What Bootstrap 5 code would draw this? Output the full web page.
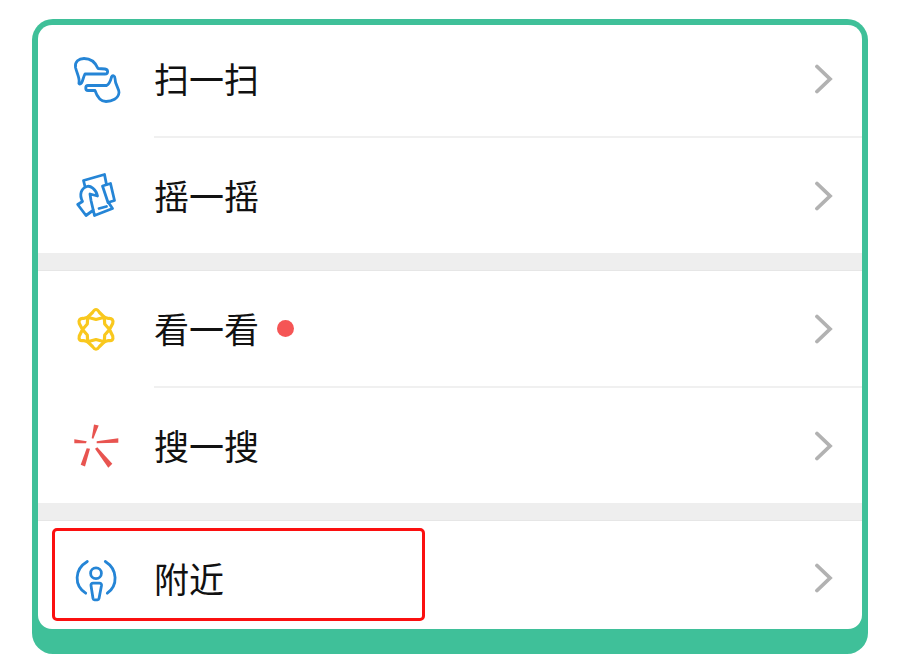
<!doctype html>
<html lang="zh">
<head>
	<meta charset="utf-8">
	<meta name="viewport" content="width=device-width, initial-scale=1">
	<title>发现</title>
	<link href="https://cdn.jsdelivr.net/npm/bootstrap@5.3.5/dist/css/bootstrap.min.css" rel="stylesheet" crossorigin="anonymous">
	<style>
		body { background: #fff; font-family: "Liberation Sans", "Noto Sans CJK SC", sans-serif; }
		.page-wrap { padding: 19px 32px 12px; }
		.phone-frame { padding: 6px 6px 25px; border-radius: 21px; height: 635px; background: #3fc099; }
		.phone-inner { background: #fff; border-radius: 14px; height: 604px; overflow: hidden; }
		.row-a { height: 113px; }
		.row-b { height: 115px; }
		.row-c { height: 117px; }
		.row-d { height: 109px; padding-top: 8px; }
		.row-b .row-body, .row-c .row-body { padding-top: 4px; }
		.row-d .row-title { margin-top: 2px; }
		.row-icon { width: 60px; height: 60px; margin-left: 28px; margin-right: 28px; flex: none; }
		.row-body { height: 100%; padding-right: 28px; min-width: 0; }
		.row-body.with-line { border-bottom: 2px solid #f0f0f0; }
		.row-title { font-size: 35px; color: #111; line-height: 1; }
		.red-dot { width: 17px; height: 17px; background: #f55555; border-radius: 50%; margin-left: 18px; margin-top: -4px; }
		.chevron { width: 20px; height: 30px; flex: none; margin-top: -3px; }
		.group-gap { height: 18px; background: #eeeeee; border-bottom: 1px solid #e6e6e6; }
		.picked-box { left: 14px; top: 503px; width: 373px; height: 93px; border: 3px solid #fb1010; border-radius: 5px; }
		.ico-blue { fill: none; stroke: #2585d6; stroke-width: 2.8; stroke-linejoin: round; stroke-linecap: round; }
		.ico-yellow { fill: none; stroke: #f9c81e; stroke-width: 3.2; stroke-linejoin: round; }
		.ico-red { fill: #e85450; }
	</style>
</head>
<body>
	<svg width="0" height="0" class="position-absolute">
		<symbol id="chev" viewBox="0 0 20 30">
			<path d="M3 2.5 L16 15 L3 27.5" fill="none" stroke="#b2b2b2" stroke-width="3.8" stroke-linecap="round" stroke-linejoin="miter"/>
		</symbol>
	</svg>

	<div class="page-wrap">
		<div class="phone-frame">
			<div class="phone-inner position-relative">

				<div class="row-a d-flex">
					<svg class="row-icon align-self-center" viewBox="66 51.5 60 60">
						<path class="ico-blue" d="M79 82 C80 78 77 73 75.5 67 C74.5 61 79 58 84 58 C90 58 95 61 98 68 L105 68.5 C108.5 69 108.5 73.5 105 73.5 L85 73.5 C83.5 76 83 80 81.5 82.5 C80.5 84 78.5 84 79 82 Z"/>
						<path class="ico-blue" d="M111.5 76.5 C110.5 80 110 83 106.5 85 L88 85 C85 85 85 90 88 90 L95 90 C97 96 100 101 106 101 C112 101 118.5 98 119 92 C119 88 115 84 115 78 C115 75 112.5 74.5 111.5 76.5 Z"/>
					</svg>
					<div class="row-body with-line flex-grow-1 d-flex align-items-center justify-content-between">
						<span class="row-title">扫一扫</span>
						<svg class="chevron"><use href="#chev"/></svg>
					</div>
				</div>

				<div class="row-b d-flex">
					<svg class="row-icon align-self-center" viewBox="66 165.5 60 60">
						<path class="ico-blue" d="M85 186 L83.5 180 L104.5 174 L106.5 184"/>
						<path class="ico-blue" d="M108.5 202 L112.5 208 L94.5 215 L91 200 L90 193.5 L97.5 195.5 C96 188 90 185 87 186 C81 188 79 194 82.5 201 L77.7 204 L86 215 L93.5 209.5"/>
						<path class="ico-blue" d="M102.5 185.5 L110.5 183 L114.5 200 L108 202 Z"/>
						<path class="ico-blue" d="M99 208 L106.5 206"/>
					</svg>
					<div class="row-body flex-grow-1 d-flex align-items-center justify-content-between">
						<span class="row-title">摇一摇</span>
						<svg class="chevron"><use href="#chev"/></svg>
					</div>
				</div>

				<div class="group-gap"></div>

				<div class="row-c d-flex">
					<svg class="row-icon align-self-center" viewBox="66 299.5 60 60">
						<path class="ico-yellow" d="M92.5 312 Q96 306 99.5 312 L104.3 316.7 L108.5 318 Q114 317.5 112.7 323 L109.5 329 L112.7 335.5 Q114 341 108.5 340 L104.3 341.3 L99.5 346 Q96 351.5 92.5 346 L87.7 341.3 L83.5 340 Q78 341 79.3 335.5 L82.5 329 L79.3 323 Q78 317.5 83.5 318 L87.7 316.7 Z"/>
						<path class="ico-yellow" d="M104.3 316.7 L104.7 323.5 L109.5 329 L104.7 334.5 L104.3 341.3 L96 339 L87.7 341.3 L87.3 334.5 L82.5 329 L87.3 323.5 L87.7 316.7 L96 319 Z"/>
					</svg>
					<div class="row-body with-line flex-grow-1 d-flex align-items-center justify-content-between">
						<div class="d-flex align-items-center">
							<span class="row-title">看一看</span>
							<span class="red-dot d-inline-block"></span>
						</div>
						<svg class="chevron"><use href="#chev"/></svg>
					</div>
				</div>

				<div class="row-b d-flex">
					<svg class="row-icon align-self-center" viewBox="66 415.5 60 60">
						<polygon class="ico-red" points="94,424 98.7,425 93.3,438.3 91.7,437.7"/>
						<polygon class="ico-red" points="96.7,440.7 118.3,437.7 118.3,442.3 96.7,442.7"/>
						<polygon class="ico-red" points="74.3,438.7 86.7,440.7 86,442.7 74.3,442.7"/>
						<polygon class="ico-red" points="86.7,447.7 90,448.3 85,466 80.7,464.3"/>
						<polygon class="ico-red" points="95,448.3 97.3,446.7 112.3,463.3 108.3,467.3"/>
					</svg>
					<div class="row-body flex-grow-1 d-flex align-items-center justify-content-between">
						<span class="row-title">搜一搜</span>
						<svg class="chevron"><use href="#chev"/></svg>
					</div>
				</div>

				<div class="group-gap"></div>

				<div class="row-d d-flex">
					<svg class="row-icon align-self-center" viewBox="66 548.5 60 60">
						<path class="ico-blue" d="M87.3 560 C74 568 74 584 85.7 591.7"/>
						<path class="ico-blue" d="M105.3 560 C118 568 118 584 107.3 591.7"/>
						<circle class="ico-blue" cx="96" cy="571.7" r="5.4"/>
						<path class="ico-blue" d="M93 581.7 L99.5 581.7 C101 581.7 101.7 582.7 101.5 584 L99 597 C98.8 598 98.4 598.3 97.5 598.3 L94.5 598.3 C93.6 598.3 93.2 598 93 597 L91 584 C90.8 582.7 91.5 581.7 93 581.7 Z"/>
					</svg>
					<div class="row-body flex-grow-1 d-flex align-items-center justify-content-between">
						<span class="row-title">附近</span>
						<svg class="chevron"><use href="#chev"/></svg>
					</div>
				</div>

				<div class="picked-box position-absolute"></div>
			</div>
		</div>
	</div>

	<script src="https://cdn.jsdelivr.net/npm/bootstrap@5.3.5/dist/js/bootstrap.bundle.min.js" crossorigin="anonymous"></script>
</body>
</html>
